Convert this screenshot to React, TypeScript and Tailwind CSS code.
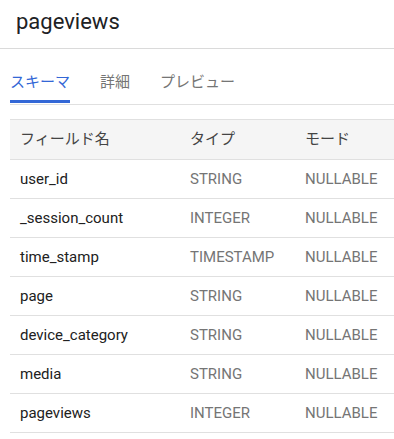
const fields = [
  { name: "user_id", type: "STRING", mode: "NULLABLE" },
  { name: "_session_count", type: "INTEGER", mode: "NULLABLE" },
  { name: "time_stamp", type: "TIMESTAMP", mode: "NULLABLE" },
  { name: "page", type: "STRING", mode: "NULLABLE" },
  { name: "device_category", type: "STRING", mode: "NULLABLE" },
  { name: "media", type: "STRING", mode: "NULLABLE" },
  { name: "pageviews", type: "INTEGER", mode: "NULLABLE" },
];

const tabs = ["スキーマ", "詳細", "プレビュー"];

export default function App() {
  return (
    <div className="h-[439px] w-[394px] bg-white font-['Roboto','Noto_Sans_CJK_JP',sans-serif] text-[15px] text-[#212121]">
      <div className="h-[49px] border-b border-[#dadada] pl-4 pt-[9px]">
        <h1 className="text-[22px] leading-[26px] text-[#202124]">pageviews</h1>
      </div>

      <div className="ml-[10px] flex gap-[30px] border-b border-[#e0e0e0] pb-[1px]">
        {tabs.map((t, i) => (
          <div
            key={t}
            className={
              i === 0
                ? "border-b-[3px] border-[#3367d6] pb-[7px] pt-[22px] leading-[22px] text-[#3367d6]"
                : "border-b-[3px] border-transparent pb-[7px] pt-[22px] leading-[22px] text-[#757575]"
            }
          >
            {t}
          </div>
        ))}
      </div>

      <div className="ml-[10px] mt-[14px] border-t border-[#e0e0e0]">
        <div className="grid h-[40px] grid-cols-[180px_115px_1fr] items-center border-b border-[#e0e0e0] bg-[#f5f5f5] text-[#444]">
          <div className="pl-[10px]">フィールド名</div>
          <div>タイプ</div>
          <div>モード</div>
        </div>
        {fields.map((f) => (
          <div
            key={f.name}
            className="grid h-[39px] grid-cols-[180px_115px_1fr] items-center border-b border-[#e0e0e0]"
          >
            <div className="pl-[10px] text-[#212121]">{f.name}</div>
            <div className="text-[#757575]">{f.type}</div>
            <div className="text-[#757575]">{f.mode}</div>
          </div>
        ))}
      </div>
    </div>
  );
}
